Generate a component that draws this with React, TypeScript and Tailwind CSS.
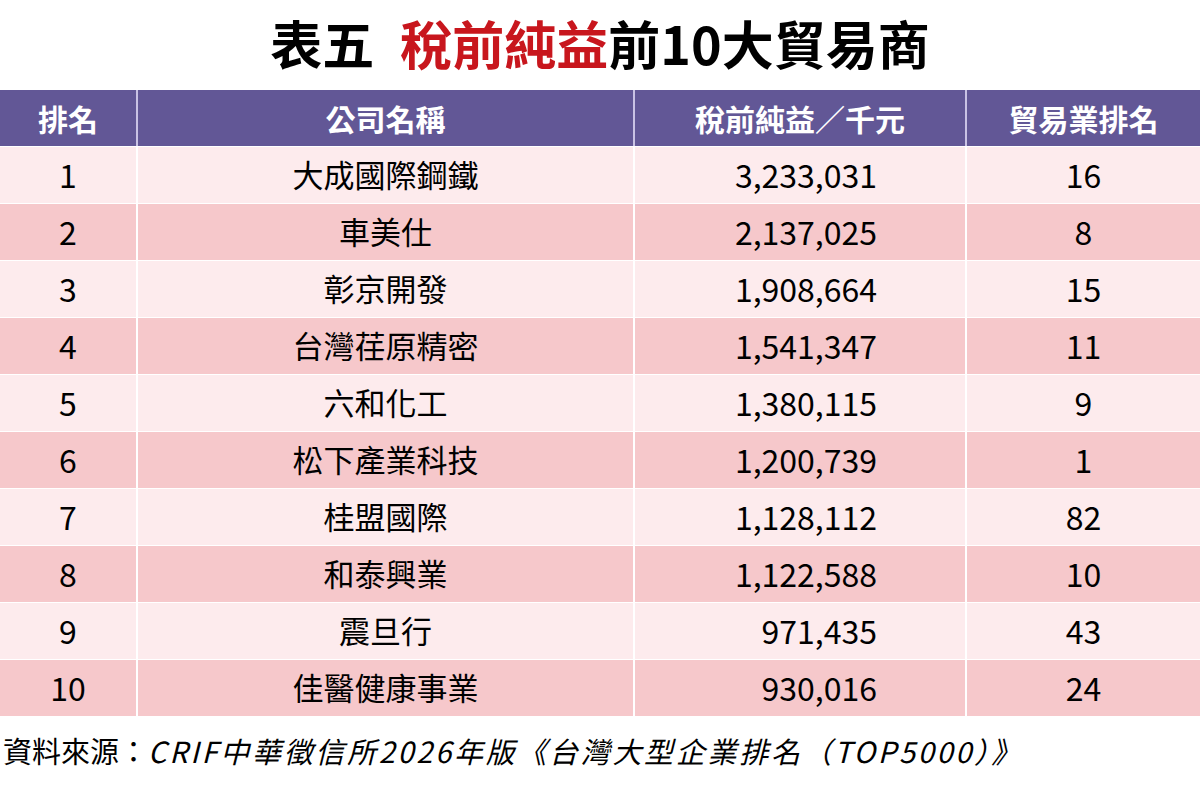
const rows: [string, string, string, string][] = [
  ['1', '大成國際鋼鐵', '3,233,031', '16'],
  ['2', '車美仕', '2,137,025', '8'],
  ['3', '彰京開發', '1,908,664', '15'],
  ['4', '台灣荏原精密', '1,541,347', '11'],
  ['5', '六和化工', '1,380,115', '9'],
  ['6', '松下產業科技', '1,200,739', '1'],
  ['7', '桂盟國際', '1,128,112', '82'],
  ['8', '和泰興業', '1,122,588', '10'],
  ['9', '震旦行', '971,435', '43'],
  ['10', '佳醫健康事業', '930,016', '24'],
];

const font = { fontFamily: '"Noto Sans CJK TC", "Noto Sans", sans-serif' };

export default function App() {
  return (
    <div className="w-[1200px] h-[790px] bg-white text-black overflow-hidden" style={font}>
      <h1 className="h-[90px] pt-[11px] text-center text-[52px] font-bold leading-[64px]">
        表五<span className="inline-block w-[26px]" />
        <span className="text-[#c8161d]">稅前純益</span>前10大貿易商
      </h1>

      <div className="grid grid-cols-[136px_495px_330px_1fr] gap-x-[2px] gap-y-[1px] bg-white">
        <div className="contents">
          {['排名', '公司名稱', '稅前純益／千元', '貿易業排名'].map((h, i) => (
            <div
              key={h}
              className={`h-[56px] bg-[#625796] flex items-center justify-center text-white text-[30px] font-bold ${
                i > 0 ? 'shadow-[-2px_0_0_#c9c2e4]' : ''
              }`}
            >
              {h}
            </div>
          ))}
        </div>
        {rows.map(([rank, name, profit, tradeRank], idx) => {
          const bg = idx % 2 === 0 ? 'bg-[#fdebed]' : 'bg-[#f6c8cb]';
          return (
            <div key={rank} className="contents">
              <div className={`${bg} h-[56px] pb-[2px] flex items-center justify-center text-[32px]`}>{rank}</div>
              <div className={`${bg} h-[56px] pb-[2px] flex items-center justify-center text-[31px]`}>{name}</div>
              <div className={`${bg} h-[56px] pb-[2px] flex items-center justify-end pr-[88px] text-[32px]`}>{profit}</div>
              <div className={`${bg} h-[56px] pb-[2px] flex items-center justify-center text-[32px]`}>{tradeRank}</div>
            </div>
          );
        })}
      </div>

      <p className="pl-[3px] pt-[14px] text-[29px] leading-[40px]">
        資料來源：<span className="italic tracking-[2.7px]">CRIF中華徵信所2026年版《台灣大型企業排名（TOP5000）》</span>
      </p>
    </div>
  );
}
